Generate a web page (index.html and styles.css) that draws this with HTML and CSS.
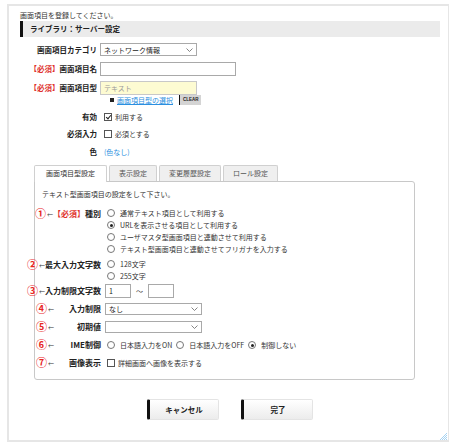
FILE: index.html
```html
<!DOCTYPE html>
<html lang="ja">
<head>
    <meta charset="UTF-8" />
    <title>画面項目登録</title>
    <link rel="stylesheet" href="styles.css">
</head>
<body>
    <div class="frame">
        <p class="intro">画面項目を登録してください。</p>
        <h2 class="bar">ライブラリ：サーバー設定</h2>

        <div class="form">
            <div class="row">
                <label class="lbl">画面項目カテゴリ</label>
                <div class="select w96"><span>ネットワーク情報</span><svg width="7" height="4" viewBox="0 0 7 4"><path d="M0.5 0.5L3.5 3.5L6.5 0.5" fill="none" stroke="#666" stroke-width="0.8"/></svg></div>
            </div>
            <div class="row">
                <label class="lbl"><em>【必須】</em>画面項目名</label>
                <div class="text w135"></div>
            </div>
            <div class="row">
                <label class="lbl"><em>【必須】</em>画面項目型</label>
                <div class="text w96 yellow">テキスト</div>
            </div>
            <div class="sub">
                <span class="sq"></span>
                <a class="link" href="#">画面項目型の選択</a>
                <span class="clear">CLEAR</span>
            </div>
            <div class="row h17">
                <label class="lbl">有効</label>
                <span class="check on"></span><span>利用する</span>
            </div>
            <div class="row h18">
                <label class="lbl">必須入力</label>
                <span class="check"></span><span>必須とする</span>
            </div>
            <div class="row h17">
                <label class="lbl">色</label>
                <span class="blue">(色なし)</span>
            </div>
        </div>

        <div class="tabs">
            <span class="tab active">画面項目型設定</span>
            <span class="tab">表示設定</span>
            <span class="tab">変更履歴設定</span>
            <span class="tab">ロール設定</span>
        </div>
        <div class="panel">
            <p class="note">テキスト型画面項目の設定をして下さい。</p>

            <div class="prow top">
                <div class="head"><span class="num">①<i>←</i></span><span class="plbl"><em>【必須】</em>種別</span></div>
                <div class="opts">
                    <div class="opt"><span class="radio"></span>通常テキスト項目として利用する</div>
                    <div class="opt"><span class="radio on"></span>URLを表示させる項目として利用する</div>
                    <div class="opt"><span class="radio"></span>ユーザマスタ型画面項目と連動させて利用する</div>
                    <div class="opt"><span class="radio"></span>テキスト型画面項目と連動させてフリガナを入力する</div>
                </div>
            </div>
            <div class="prow top gap1">
                <div class="head"><span class="num">②<i>←</i></span><span class="plbl">最大入力文字数</span></div>
                <div class="opts">
                    <div class="opt"><span class="radio"></span>128文字</div>
                    <div class="opt"><span class="radio"></span>255文字</div>
                </div>
            </div>
            <div class="prow h18">
                <div class="head"><span class="num">③<i>←</i></span><span class="plbl">入力制限文字数</span></div>
                <div class="text w25">1</div>
                <span class="tilde">～</span>
                <div class="text w25"></div>
            </div>
            <div class="prow h18">
                <div class="head"><span class="num">④<i>←</i></span><span class="plbl">入力制限</span></div>
                <div class="select w96 short"><span>なし</span><svg width="7" height="4" viewBox="0 0 7 4"><path d="M0.5 0.5L3.5 3.5L6.5 0.5" fill="none" stroke="#666" stroke-width="0.8"/></svg></div>
            </div>
            <div class="prow h18">
                <div class="head"><span class="num">⑤<i>←</i></span><span class="plbl">初期値</span></div>
                <div class="select w96 short"><span></span><svg width="7" height="4" viewBox="0 0 7 4"><path d="M0.5 0.5L3.5 3.5L6.5 0.5" fill="none" stroke="#666" stroke-width="0.8"/></svg></div>
            </div>
            <div class="prow h18">
                <div class="head"><span class="num">⑥<i>←</i></span><span class="plbl">IME制御</span></div>
                <span class="radio"></span><span class="ropt">日本語入力をON</span>
                <span class="radio"></span><span class="ropt">日本語入力をOFF</span>
                <span class="radio on"></span><span class="ropt">制御しない</span>
            </div>
            <div class="prow h18">
                <div class="head"><span class="num">⑦<i>←</i></span><span class="plbl">画像表示</span></div>
                <span class="check"></span><span>詳細画面へ画像を表示する</span>
            </div>
        </div>

        <div class="buttons">
            <button class="btn">キャンセル</button>
            <button class="btn">完了</button>
        </div>

        <svg class="grip" width="8" height="8" viewBox="0 0 8 8">
            <path d="M8 1L1 8M8 3L3 8M8 5L5 8M8 7L7 8" stroke="#8fc8ef" stroke-width="0.8"/>
        </svg>
    </div>
</body>
</html>
```

FILE: styles.css
```css
body {
    margin: 0;
    padding: 4px 5px 2px 7px;
    background: #fff;
    font-family: "Noto Sans CJK JP", "Noto Sans", sans-serif;
    font-size: 7px;
    line-height: 10px;
    color: #333;
}

.frame {
    position: relative;
    height: 434px;
    border: 2px solid #e6e6e6;
    border-right-width: 1px;
    padding: 0 0 0 11px;
}

.intro {
    margin: 4px 0 0;
    line-height: 10px;
}

.bar {
    margin: 1px 8px 0 0;
    height: 16px;
    line-height: 16px;
    border-left: 3px solid #111;
    background: #ebebeb;
    padding-left: 7px;
    font-size: 7.5px;
    font-weight: bold;
    color: #222;
}

.form {
    margin: 3px 0 0 -11px;
}

.row {
    display: flex;
    align-items: center;
    height: 19px;
}

.row.h17 { height: 17px; }
.row.h18 { height: 18px; }

.row .lbl {
    width: 88px;
    padding-right: 3px;
    text-align: right;
    font-weight: bold;
    font-size: 7.5px;
    color: #222;
}

em {
    font-style: normal;
    color: #e0322d;
}

.select,
.text {
    box-sizing: border-box;
    height: 14px;
    border: 1px solid #a9a9a9;
    background: #fff;
    padding: 0 3px;
    line-height: 12px;
    color: #222;
}

.select {
    display: flex;
    align-items: center;
    justify-content: space-between;
    height: 13px;
}

.w96 { width: 97px; }
.w135 { width: 136px; }
.w25 { width: 26px; }

.yellow {
    background: #fdfbd2;
    border-color: #c8c8c8;
    color: #999;
}

.sub {
    display: flex;
    align-items: center;
    height: 13px;
    margin: -4px 0 2px 101px;
}

.sq {
    width: 4px;
    height: 4px;
    background: #222;
    margin-right: 3px;
}

.link {
    color: #2b8fe0;
    text-decoration: underline;
}

.clear {
    margin-left: 6px;
    height: 10px;
    line-height: 10px;
    padding: 0 2px 0 3px;
    border-left: 1px solid #111;
    background: #d4d4d4;
    font-size: 4.5px;
    font-weight: bold;
    font-family: "Liberation Sans", sans-serif;
    color: #222;
}

.row .check,
.row .blue {
    margin-left: 4px;
}

.check {
    display: inline-block;
    box-sizing: border-box;
    width: 8px;
    height: 8px;
    border: 1px solid #555;
    background: #fff;
    margin-right: 3px;
    position: relative;
}

.check.on::after {
    content: "";
    position: absolute;
    left: 2px;
    top: 0;
    width: 2px;
    height: 4px;
    border: solid #222;
    border-width: 0 1px 1px 0;
    transform: rotate(40deg);
}

.blue {
    color: #2b8fe0;
}

.tabs {
    display: flex;
    gap: 2px;
    margin: 5px 0 0 14px;
    height: 16px;
}

.tab {
    box-sizing: border-box;
    height: 16px;
    line-height: 15px;
    padding: 0 9px;
    border: 1px solid #d0d0d0;
    border-bottom: none;
    border-radius: 2px 2px 0 0;
    background: #efefef;
    color: #555;
}

.tab.active {
    background: #fff;
    height: 17px;
    position: relative;
    z-index: 1;
    color: #333;
    padding: 0 11px;
}

.panel {
    box-sizing: border-box;
    width: 381px;
    height: 199px;
    margin-left: 14px;
    border: 1px solid #c8c8c8;
    border-radius: 0 3px 3px 3px;
    padding: 7px 0 0 0;
}

.note {
    margin: 0 0 8px 7px;
    line-height: 10px;
}

.prow {
    display: flex;
    align-items: center;
    line-height: 12px;
}

.prow.top {
    align-items: flex-start;
}

.prow.gap1 {
    margin-top: 3px;
}

.prow.h18 {
    height: 18px;
}

.head {
    display: flex;
    justify-content: flex-end;
    align-items: center;
    width: 65px;
    padding-left: 1px;
    margin-right: 4px;
    flex: none;
}

.num {
    margin-right: auto;
    color: #e8261f;
    font-size: 11px;
    font-weight: bold;
    line-height: 12px;
    white-space: nowrap;
}

.num i {
    font-style: normal;
    font-weight: normal;
    font-size: 6px;
    color: #333;
    vertical-align: 1px;
    margin-left: 1px;
}

.plbl {
    text-align: right;
    font-weight: bold;
    font-size: 8px;
    color: #222;
    white-space: nowrap;
    line-height: 12px;
}

.opts {
    display: flex;
    flex-direction: column;
    margin-left: 2px;
}

.opt {
    display: flex;
    align-items: center;
    height: 12px;
}

.radio {
    display: inline-block;
    box-sizing: border-box;
    width: 8px;
    height: 8px;
    border: 1px solid #777;
    border-radius: 50%;
    background: #fff;
    margin-right: 5px;
    position: relative;
    flex: none;
}

.radio.on::after {
    content: "";
    position: absolute;
    left: 1.5px;
    top: 1.5px;
    width: 3px;
    height: 3px;
    border-radius: 50%;
    background: #222;
}

.prow.h18 > .radio {
    margin-left: 2px;
}

.ropt {
    margin-right: 2px;
}

.prow.h18 > .check {
    margin-left: 2px;
}

.tilde {
    margin: 0 5px;
}

.select.short {
    height: 12px;
}

.buttons {
    display: flex;
    justify-content: center;
    gap: 22px;
    margin: 19px 0 0 -8px;
}

.btn {
    box-sizing: border-box;
    width: 72px;
    height: 21px;
    border: 1px solid #e4e4e4;
    border-left: 3px solid #111;
    border-radius: 2px;
    background: linear-gradient(#fff, #ececec);
    font-family: "Noto Sans CJK JP", sans-serif;
    font-size: 7.5px;
    font-weight: bold;
    color: #222;
    padding: 0;
}

.grip {
    position: absolute;
    right: 1px;
    bottom: 0;
}
```
